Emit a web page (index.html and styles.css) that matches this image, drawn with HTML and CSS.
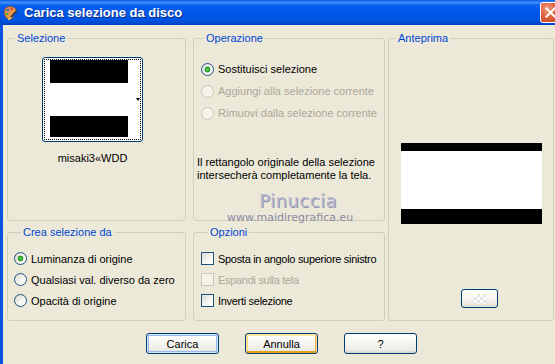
FILE: index.html
```html
<!DOCTYPE html>
<html lang="it">
<head>
    <meta charset="UTF-8">
    <meta name="viewport" content="width=device-width, initial-scale=1.0">
    <title>Carica selezione da disco</title>
    <link rel="stylesheet" href="styles.css">
</head>
<body>
    <div class="window">
        <!-- Barra del titolo -->
        <div class="titlebar">
            <svg class="app-icon" viewBox="0 0 13 14" width="13" height="14">
                <path d="M2 2 C5 -0.5 11 0.5 12 4 C13 7 10 7 9 8.5 C8 10 10 12 7 13 C3 14 0 10 0.5 6 C0.7 4.5 1 3 2 2 Z" fill="#e8944a" stroke="#9a4f1c" stroke-width="0.8"/>
                <circle cx="4" cy="4" r="1.3" fill="#2a5fd8"/>
                <circle cx="7.5" cy="3" r="1.2" fill="#e23a2a"/>
                <circle cx="3" cy="8" r="1.3" fill="#3cab3c"/>
                <path d="M12.5 5 L6 12" stroke="#3a3a3a" stroke-width="1.6" stroke-linecap="round"/>
                <path d="M6.5 11.5 L4.8 13.6" stroke="#f0d040" stroke-width="1.6" stroke-linecap="round"/>
            </svg>
            <span class="title">Carica selezione da disco</span>
            <button class="close-btn" aria-label="Chiudi">
                <svg viewBox="0 0 21 21" width="21" height="21">
                    <path d="M6 6 L15 15 M15 6 L6 15" stroke="#fff" stroke-width="2.2" stroke-linecap="square"/>
                </svg>
            </button>
        </div>

        <div class="dialog">
            <div class="groups">
                <fieldset class="group group-selection">
                    <legend>Selezione</legend>
                    <button class="thumb">
                        <span class="thumb-focus">
                            <span class="thumb-image"></span>
                            <span class="thumb-arrow"></span>
                        </span>
                    </button>
                    <div class="thumb-name">misaki3«WDD</div>
                </fieldset>

                <fieldset class="group group-operation">
                    <legend>Operazione</legend>
                    <label class="row"><input type="radio" name="op" checked> Sostituisci selezione</label>
                    <label class="row disabled"><input type="radio" name="op" disabled> Aggiungi alla selezione corrente</label>
                    <label class="row disabled"><input type="radio" name="op" disabled> Rimuovi dalla selezione corrente</label>
                    <p class="note">Il rettangolo originale della selezione intersecherà completamente la tela.</p>
                </fieldset>

                <fieldset class="group group-preview">
                    <legend>Anteprima</legend>
                    <div class="preview"></div>
                    <button class="small-btn" aria-label="Sfondo"><span class="checker"></span></button>
                </fieldset>

                <fieldset class="group group-source">
                    <legend>Crea selezione da</legend>
                    <label class="row"><input type="radio" name="src" checked> Luminanza di origine</label>
                    <label class="row"><input type="radio" name="src"> Qualsiasi val. diverso da zero</label>
                    <label class="row"><input type="radio" name="src"> Opacità di origine</label>
                </fieldset>

                <fieldset class="group group-options">
                    <legend>Opzioni</legend>
                    <label class="row"><input type="checkbox"> Sposta in angolo superiore sinistro</label>
                    <label class="row disabled"><input type="checkbox" disabled> Espandi sulla tela</label>
                    <label class="row"><input type="checkbox"> Inverti selezione</label>
                </fieldset>

                <!-- Filigrana -->
                <div class="watermark">
                    <span class="wm-name">Pinuccia</span>
                    <span class="wm-site">www.maidiregrafica.eu</span>
                </div>
            </div>

            <div class="actions">
                <button class="btn btn-default">Carica</button>
                <button class="btn btn-hot">Annulla</button>
                <button class="btn">?</button>
            </div>
        </div>
    </div>
</body>
</html>
```

FILE: styles.css
```css
/* Finestra stile XP */
body {
    margin: 0;
    background: #ece9d8;
    overflow: hidden;
    font-family: "Liberation Sans", Arial, sans-serif;
    font-size: 11px;
    color: #000;
}

.window {
    width: 563px;
}

.titlebar {
    height: 25px;
    display: flex;
    align-items: center;
    padding-left: 4px;
    background: linear-gradient(#0b5fe9 0%, #3d8dfb 10%, #0a5ff0 22%, #0055e5 55%, #0053e0 82%, #0043c4 100%);
    color: #fff;
}

.app-icon {
    margin-right: 7px;
    flex-shrink: 0;
}

.title {
    font-weight: bold;
    font-size: 13px;
    line-height: 15px;
    text-shadow: 1px 1px 0 #0b2e8c;
}

.close-btn {
    margin-left: auto;
    margin-right: 2px;
    width: 21px;
    height: 21px;
    padding: 0;
    border: 1px solid #fff;
    border-radius: 3px;
    background: radial-gradient(circle at 35% 30%, #f09a7e 0%, #e0613f 45%, #c84323 100%);
    display: flex;
    align-items: center;
    justify-content: center;
}

.close-btn svg {
    display: block;
}

.dialog {
    border-left: 3px solid #0654e0;
    padding: 7px 0 20px 4px;
}

/* Gruppi */
.groups {
    position: relative;
    display: grid;
    grid-template-columns: 179px 199px 169px;
    grid-template-rows: 189px 95px;
    row-gap: 5px;
}

.group {
    margin: 0;
    padding: 0;
    min-width: 0;
    border: 1px solid #d0d0bf;
    border-radius: 3px;
}

.group legend {
    margin-left: 7px;
    padding: 0 2px;
    color: #0046d5;
    line-height: 13px;
}

.group-selection {
    grid-column: 1;
    grid-row: 1;
    display: flex;
    flex-direction: column;
    align-items: center;
    padding-right: 8px;
}

.group-operation {
    grid-column: 2;
    grid-row: 1;
    margin-left: 7px;
    padding: 13px 0 0 3px;
}

.group-preview {
    grid-column: 3;
    grid-row: 1 / 3;
    margin-left: 3px;
    display: flex;
    flex-direction: column;
    align-items: flex-start;
}

.group-source {
    grid-column: 1;
    grid-row: 2;
    padding: 9px 0 0 6px;
}

.group-options {
    grid-column: 2;
    grid-row: 2;
    margin-left: 7px;
    padding: 9px 0 0 7px;
}

/* Miniatura */
.thumb {
    margin-top: 12px;
    width: 101px;
    height: 85px;
    padding: 1px;
    border: 1px solid #003c74;
    border-radius: 3px;
    background: #fff;
    display: block;
}

.thumb-focus {
    display: flex;
    height: 100%;
    box-sizing: border-box;
    border: 1px dotted #000;
}

.thumb-image {
    margin-left: 5px;
    width: 78px;
    height: 77px;
    box-sizing: border-box;
    border-top: 23px solid #000;
    border-bottom: 21px solid #000;
    background: #fff;
}

.thumb-arrow {
    margin: 38px 0 0 8px;
    width: 0;
    height: 0;
    border-left: 2px solid transparent;
    border-right: 2px solid transparent;
    border-top: 3px solid #000;
}

.thumb-name {
    margin-top: 10px;
    line-height: 13px;
}

/* Righe radio / checkbox */
.row {
    display: flex;
    align-items: center;
    height: 22px;
    padding-left: 4px;
    white-space: nowrap;
}

.group-source .row,
.group-options .row {
    height: 21px;
    padding-left: 0;
}

.group-options .row {
    letter-spacing: -0.3px;
}

.row.disabled {
    color: #aca899;
}

.row input {
    appearance: none;
    -webkit-appearance: none;
    margin: 0 4px 0 0;
    width: 13px;
    height: 13px;
    box-sizing: border-box;
    border: 1px solid #1c5180;
    background: linear-gradient(135deg, #dcdcd5 0%, #f6f6f3 60%, #fff 100%);
    flex-shrink: 0;
}

.row input[type="radio"] {
    border-radius: 50%;
}

.row input[type="radio"]:checked {
    background: radial-gradient(circle, #63d660 0, #2ba529 2px, #1e8f1c 2.6px, transparent 3.2px),
                linear-gradient(135deg, #dcdcd5 0%, #f6f6f3 60%, #fff 100%);
}

.row input:disabled {
    border-color: #cac8bb;
    background: #f5f4ea;
}

.note {
    margin: 32px 0 0;
    line-height: 13px;
}

/* Anteprima */
.preview {
    margin: 98px 0 0 12px;
    width: 141px;
    height: 81px;
    box-sizing: border-box;
    border-top: 8px solid #000;
    border-bottom: 15px solid #000;
    background: #fff;
}

.small-btn {
    margin: 65px 0 0 72px;
    width: 37px;
    height: 19px;
    padding: 0;
    border: 1px solid #003c74;
    border-radius: 3px;
    background: linear-gradient(#fff 0%, #f3f2ec 60%, #e2dfd2 100%);
    display: flex;
    align-items: center;
    justify-content: center;
}

.checker {
    width: 12px;
    height: 10px;
    background: repeating-conic-gradient(#e4e4e4 0 25%, #fdfdfd 0 50%) 0 0 / 6px 6px;
}

/* Filigrana */
.watermark {
    position: absolute;
    left: 220px;
    top: 158px;
    width: 120px;
    display: flex;
    flex-direction: column;
}

.wm-name {
    margin-left: 32px;
    font-family: "DejaVu Sans", sans-serif;
    font-size: 18px;
    line-height: 21px;
    letter-spacing: 0.5px;
    color: #babad2;
    text-shadow: 1px 1px 0 #9090a8;
}

.wm-site {
    font-family: "DejaVu Sans", sans-serif;
    font-size: 11px;
    line-height: 13px;
    color: #8a8aa2;
}

/* Pulsanti */
.actions {
    display: flex;
    gap: 26px;
    padding: 12px 0 0 139px;
}

.btn {
    width: 73px;
    height: 21px;
    padding: 0;
    font-family: "Liberation Sans", Arial, sans-serif;
    font-size: 11px;
    color: #000;
    border: 1px solid #003c74;
    border-radius: 3px;
    background: linear-gradient(#fff 0%, #f6f5f0 45%, #ecebe6 85%, #d6d0c5 100%);
}

.btn-default {
    box-shadow: inset 0 0 0 1px #cee7ff, inset 0 0 0 2px #98b8ea;
}

.btn-hot {
    box-shadow: inset 0 1px 0 1px #ffe7a2, inset 0 -2px 0 0 #e5a01a, inset 2px 0 0 #fbd37a, inset -2px 0 0 #f0b040;
}
```
